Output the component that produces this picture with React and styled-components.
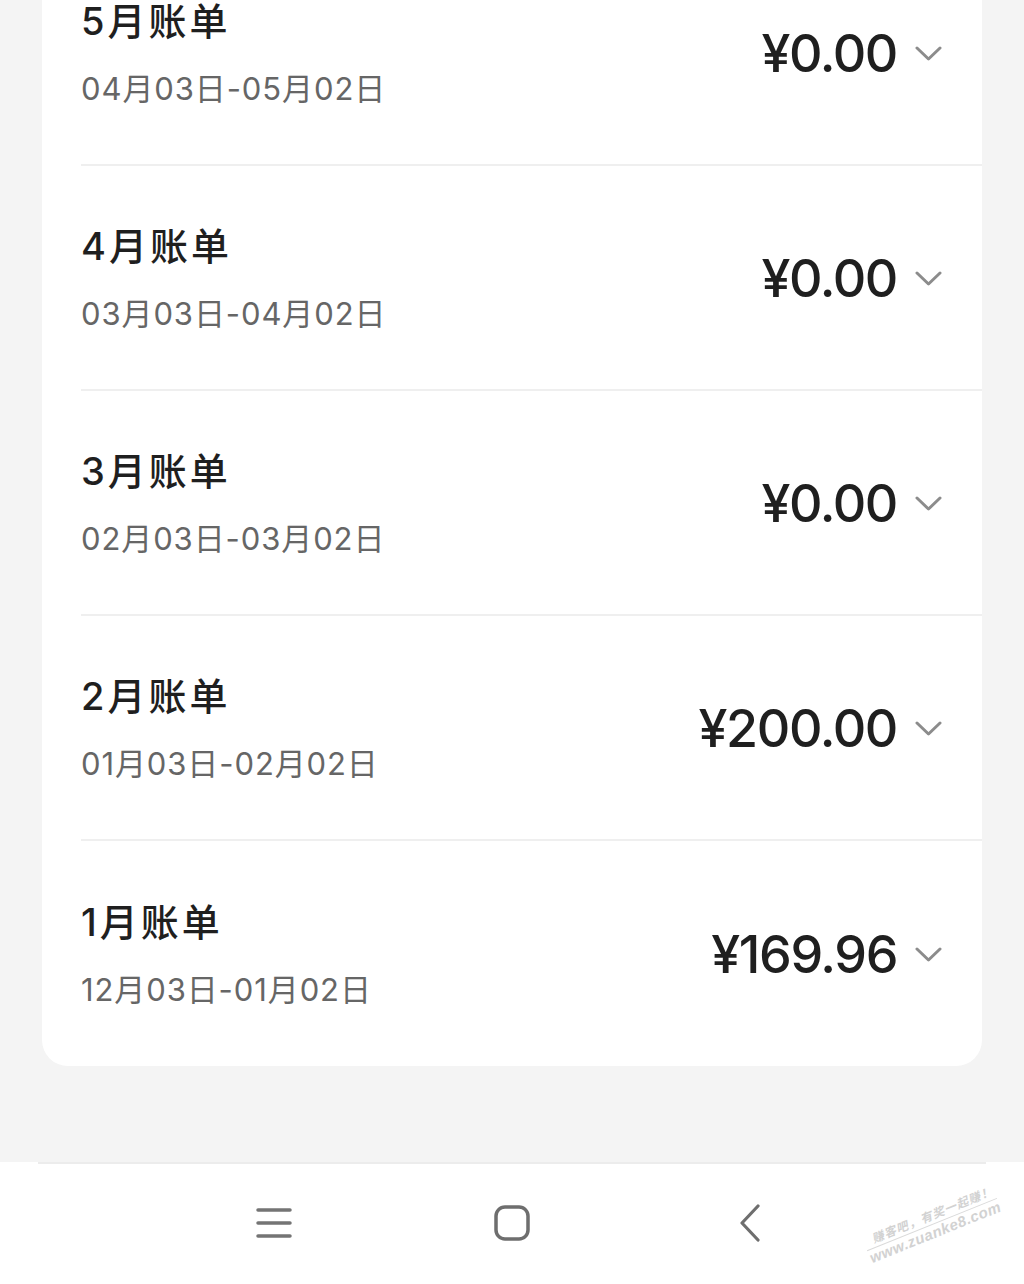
import React from "react";
import styled, { createGlobalStyle } from "styled-components";

const Global = createGlobalStyle`
  html, body { margin: 0; padding: 0; background: #f4f4f4; }
  body { font-family: Inter, "Noto Sans CJK SC", sans-serif; overflow: hidden; }
`;

const Screen = styled.div`
  width: 1024px;
  height: 1284px;
  display: flex;
  flex-direction: column;
  background: #f4f4f4;
  position: relative;
  overflow: hidden;
`;

const Content = styled.div`
  flex: 1;
  padding: 0 42px;
`;

const Card = styled.div`
  margin-top: -59px;
  background: #ffffff;
  border-radius: 0 0 26px 26px;
`;

const Row = styled.div`
  height: 225px;
  box-sizing: border-box;
  margin-left: 39px;
  padding-right: 40px;
  display: flex;
  align-items: center;
  justify-content: space-between;
  border-bottom: ${(p) => (p.$last ? "none" : "2px solid #efefef")};
`;

const Info = styled.div`
  display: flex;
  flex-direction: column;
  gap: 26px;
  padding-top: 2px;
`;

const Title = styled.div`
  font-family: Inter, "Noto Sans CJK SC", sans-serif;
  font-size: 38px;
  line-height: 44px;
  font-weight: 500;
  color: #1f1f1f;
  letter-spacing: 3px;
`;

const Period = styled.div`
  font-family: Inter, "Noto Sans CJK SC", sans-serif;
  font-size: 31px;
  line-height: 40px;
  color: #666666;
  letter-spacing: 0.9px;
`;

const AmountWrap = styled.div`
  display: flex;
  align-items: center;
  gap: 18px;
  padding-top: 2px;
`;

const Amount = styled.div`
  font-family: Inter, "Noto Sans CJK SC", sans-serif;
  font-size: 52px;
  line-height: 60px;
  font-weight: 500;
  color: #1f1f1f;
  letter-spacing: -1.4px;
`;

const Chevron = styled.svg`
  width: 27px;
  height: 16px;
  display: block;
`;

const NavBar = styled.div`
  height: 122px;
  background: #ffffff;
  position: relative;
  display: flex;
  justify-content: center;
  align-items: center;
`;

const NavLine = styled.div`
  position: absolute;
  top: 0;
  left: 38px;
  right: 38px;
  height: 2px;
  background: #ececec;
`;

const NavSlot = styled.div`
  width: 238px;
  display: flex;
  justify-content: center;
  align-items: center;
`;

const Watermark = styled.div`
  position: absolute;
  right: 22px;
  bottom: 44px;
  transform: rotate(-22deg);
  color: #d2d2d2;
  font-family: "Liberation Sans", "Noto Sans CJK SC", sans-serif;
  font-style: italic;
  font-weight: 700;
  font-size: 12px;
  line-height: 15px;
  text-align: center;
`;

const WatermarkTop = styled.div`
  border-bottom: 1px solid #dadada;
  padding-left: 8px;
  letter-spacing: 1px;
`;

const WatermarkBottom = styled.div`
  font-size: 15px;
  letter-spacing: 0.5px;
`;

const bills = [
  { title: "5月账单", period: "04月03日-05月02日", amount: "¥0.00" },
  { title: "4月账单", period: "03月03日-04月02日", amount: "¥0.00" },
  { title: "3月账单", period: "02月03日-03月02日", amount: "¥0.00" },
  { title: "2月账单", period: "01月03日-02月02日", amount: "¥200.00" },
  { title: "1月账单", period: "12月03日-01月02日", amount: "¥169.96" },
];

function Down() {
  return (
    <Chevron viewBox="0 0 27 16" fill="none">
      <path d="M2 2 L13.5 13 L25 2" stroke="#8c8c8c" strokeWidth="3" strokeLinecap="round" strokeLinejoin="round" />
    </Chevron>
  );
}

export default function App() {
  return (
    <>
      <Global />
      <Screen>
        <Content>
          <Card>
            {bills.map((b, i) => (
              <Row key={b.title} $last={i === bills.length - 1}>
                <Info>
                  <Title>{b.title}</Title>
                  <Period>{b.period}</Period>
                </Info>
                <AmountWrap>
                  <Amount>{b.amount}</Amount>
                  <Down />
                </AmountWrap>
              </Row>
            ))}
          </Card>
        </Content>
        <NavBar>
          <NavLine />
          <NavSlot>
            <svg width="36" height="32" viewBox="0 0 36 32" fill="none">
              <path d="M2 3 H34 M2 16 H34 M2 29 H34" stroke="#747474" strokeWidth="3.5" strokeLinecap="round" />
            </svg>
          </NavSlot>
          <NavSlot>
            <svg width="36" height="36" viewBox="0 0 36 36" fill="none">
              <rect x="2" y="2" width="32" height="32" rx="9" stroke="#6e6e6e" strokeWidth="3.5" />
            </svg>
          </NavSlot>
          <NavSlot>
            <svg width="24" height="38" viewBox="0 0 24 38" fill="none">
              <path d="M20 2 L4 19 L20 36" stroke="#6e6e6e" strokeWidth="3.2" strokeLinecap="round" strokeLinejoin="round" />
            </svg>
          </NavSlot>
          <Watermark>
            <WatermarkTop>赚客吧，有奖一起赚！</WatermarkTop>
            <WatermarkBottom>www.zuanke8.com</WatermarkBottom>
          </Watermark>
        </NavBar>
      </Screen>
    </>
  );
}
